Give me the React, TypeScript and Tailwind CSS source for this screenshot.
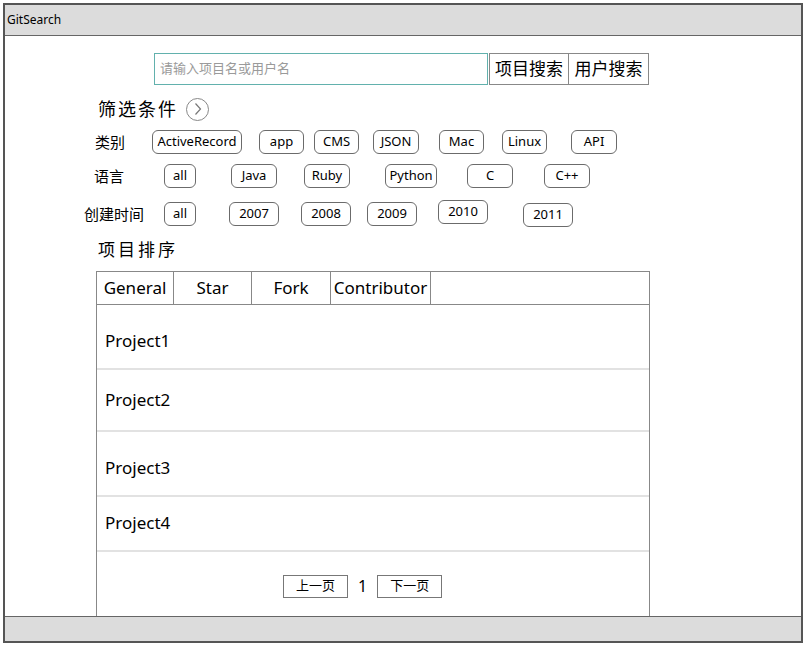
const font = { fontFamily: '"Noto Sans", "Noto Sans CJK SC", sans-serif' };

type Tag = { label: string; ml: number; w: number; mt?: number };

const categoryTags: Tag[] = [
  { label: "ActiveRecord", ml: 0, w: 90 },
  { label: "app", ml: 17, w: 45 },
  { label: "CMS", ml: 10, w: 45 },
  { label: "JSON", ml: 14, w: 46 },
  { label: "Mac", ml: 20, w: 45 },
  { label: "Linux", ml: 18, w: 45 },
  { label: "API", ml: 24, w: 46 },
];

const languageTags: Tag[] = [
  { label: "all", ml: 0, w: 32 },
  { label: "Java", ml: 35, w: 46 },
  { label: "Ruby", ml: 27, w: 46 },
  { label: "Python", ml: 35, w: 52 },
  { label: "C", ml: 30, w: 46 },
  { label: "C++", ml: 31, w: 46 },
];

const yearTags: Tag[] = [
  { label: "all", ml: 0, w: 32, mt: 0 },
  { label: "2007", ml: 33, w: 50, mt: 0 },
  { label: "2008", ml: 22, w: 50, mt: 0 },
  { label: "2009", ml: 16, w: 50, mt: 0 },
  { label: "2010", ml: 21, w: 50, mt: -2 },
  { label: "2011", ml: 35, w: 50, mt: 1 },
];

function TagRow({ label, labelMl, labelW, tags }: { label: string; labelMl: number; labelW: number; tags: Tag[] }) {
  return (
    <div className="flex items-center h-[24px]">
      <div className="text-[15px] text-black shrink-0" style={{ marginLeft: labelMl, width: labelW }}>
        {label}
      </div>
      {tags.map((t) => (
        <div
          key={t.label}
          className="h-[24px] flex items-center justify-center rounded-[6px] border border-[#6b6b6b] text-[13px] text-black shrink-0"
          style={{ marginLeft: t.ml, width: t.w, marginTop: (t.mt ?? 0) * 2 }}
        >
          {t.label}
        </div>
      ))}
    </div>
  );
}

const tabs = [
  { label: "General", w: 77 },
  { label: "Star", w: 78 },
  { label: "Fork", w: 79 },
  { label: "Contributor", w: 100 },
];

const projects = [
  { name: "Project1", h: 63, pt: 24 },
  { name: "Project2", h: 60, pt: 18 },
  { name: "Project3", h: 63, pt: 24 },
  { name: "Project4", h: 53, pt: 14 },
];

export default function App() {
  return (
    <div className="w-[809px] h-[645px] bg-white pt-[3px] pl-[3px]" style={font}>
      <div className="w-[800px] h-[640px] border-2 border-[#555] flex flex-col">
        {/* title bar */}
        <div className="h-[31px] bg-[#dcdcdc] border-b border-[#666] flex items-center pl-[2px] text-[12px] text-black">
          GitSearch
        </div>

        <div className="flex-1 flex flex-col min-h-0">
          {/* search */}
          <div className="flex mt-[17px] ml-[149px]">
            <div className="w-[334px] h-[32px] border border-[#62b1ad] flex items-center pl-[5px] text-[13px] text-[#9a9a9a]">
              请输入项目名或用户名
            </div>
            <button className="ml-[1px] w-[80px] h-[32px] border border-[#888] text-[17px] text-black">项目搜索</button>
            <button className="w-[80px] h-[32px] border border-[#888] border-l-0 text-[17px] text-black">用户搜索</button>
          </div>

          {/* filter header */}
          <div className="flex items-center mt-[12px] ml-[93px] h-[24px]">
            <span className="text-[18px] tracking-[2px] text-black">筛选条件</span>
            <span className="ml-[8px] w-[23px] h-[23px] rounded-full border border-[#888] flex items-center justify-center">
              <svg width="10" height="14" viewBox="0 0 10 14" fill="none">
                <path d="M2.5 1.5 L7.5 7 L2.5 12.5" stroke="#777" strokeWidth="1.2" />
              </svg>
            </span>
          </div>

          <div className="mt-[9px]">
            <TagRow label="类别" labelMl={90} labelW={57} tags={categoryTags} />
          </div>
          <div className="mt-[10px]">
            <TagRow label="语言" labelMl={89} labelW={70} tags={languageTags} />
          </div>
          <div className="mt-[14px]">
            <TagRow label="创建时间" labelMl={79} labelW={80} tags={yearTags} />
          </div>

          {/* sort header */}
          <div className="mt-[12px] ml-[93px] text-[17px] tracking-[3px] text-black leading-[24px]">项目排序</div>

          {/* table */}
          <div className="mt-[9px] ml-[91px] w-[554px] flex-1 border border-b-0 border-[#888] flex flex-col">
            <div className="h-[33px] border-b border-[#888] flex shrink-0">
              {tabs.map((t) => (
                <div
                  key={t.label}
                  className="h-full flex items-center justify-center border-r border-[#888] text-[17px] text-black"
                  style={{ width: t.w }}
                >
                  {t.label}
                </div>
              ))}
            </div>
            {projects.map((p) => (
              <div
                key={p.name}
                className="border-b-2 border-[#e2e2e2] pl-[8px] text-[17px] leading-[24px] text-black shrink-0"
                style={{ height: p.h + 2, paddingTop: p.pt }}
              >
                {p.name}
              </div>
            ))}
            <div className="flex items-center mt-[22px] ml-[186px]">
              <button className="w-[65px] h-[23px] border border-[#777] text-[13px] text-black">上一页</button>
              <span className="mx-[10px] text-[16px] text-black">1</span>
              <button className="w-[65px] h-[23px] border border-[#777] text-[13px] text-black">下一页</button>
            </div>
          </div>
        </div>

        {/* status bar */}
        <div className="h-[25px] bg-[#dcdcdc] border-t border-[#666] shrink-0" />
      </div>
    </div>
  );
}
